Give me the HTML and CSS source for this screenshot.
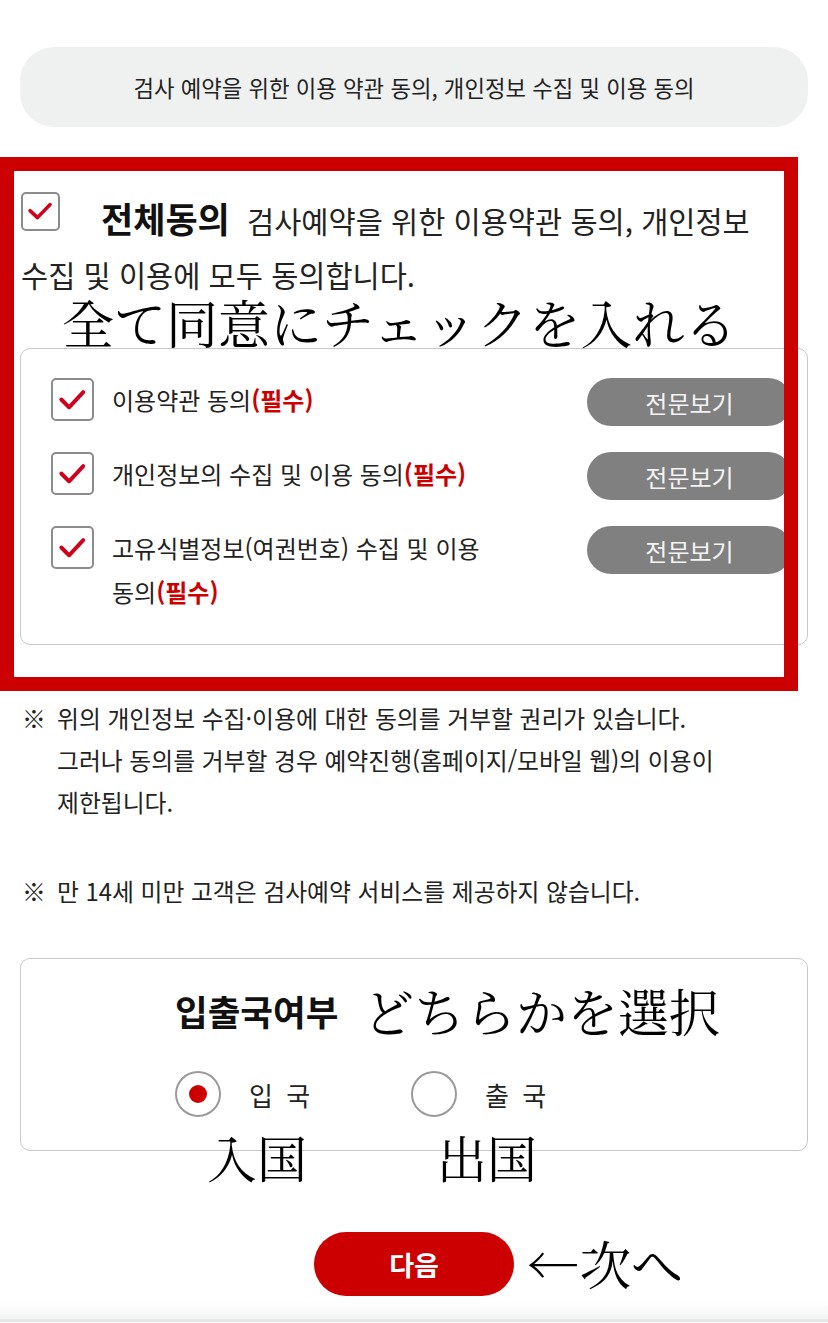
FILE: index.html
```html
<!DOCTYPE html>
<html lang="ko">
<head>
<meta charset="utf-8">
<title>검사 예약 약관 동의</title>
<link rel="stylesheet" href="styles.css">
</head>
<body>
<div class="page">
  <div class="banner">검사 예약을 위한 이용 약관 동의, 개인정보 수집 및 이용 동의</div>

  <div class="agree-all">
    <span class="check check-lg"><svg viewBox="0 0 40 40"><path d="M8 19 L16.5 27 L31 12"/></svg></span><strong class="all-title">전체동의</strong> 검사예약을 위한 이용약관 동의, 개인정보 수집 및 이용에 모두 동의합니다.
  </div>

  <div class="terms">
    <div class="term">
      <span class="check"><svg viewBox="0 0 40 40"><path d="M8.5 20 L16.5 28 L31 12.5"/></svg></span>
      <p class="term-text">이용약관 동의<b class="req">(필수)</b></p>
      <button class="view">전문보기</button>
    </div>
    <div class="term">
      <span class="check"><svg viewBox="0 0 40 40"><path d="M8.5 20 L16.5 28 L31 12.5"/></svg></span>
      <p class="term-text">개인정보의 수집 및 이용 동의<b class="req">(필수)</b></p>
      <button class="view">전문보기</button>
    </div>
    <div class="term">
      <span class="check"><svg viewBox="0 0 40 40"><path d="M8.5 20 L16.5 28 L31 12.5"/></svg></span>
      <p class="term-text">고유식별정보(여권번호) 수집 및 이용 동의<b class="req">(필수)</b></p>
      <button class="view">전문보기</button>
    </div>
  </div>

  <div class="notes">
    <div class="note"><span class="mark">※</span><p>위의 개인정보 수집·이용에 대한 동의를 거부할 권리가 있습니다.<br>그러나 동의를 거부할 경우 예약진행(홈페이지/모바일 웹)의 이용이<br>제한됩니다.</p></div>
    <div class="note note-2"><span class="mark">※</span><p>만 14세 미만 고객은 검사예약 서비스를 제공하지 않습니다.</p></div>
  </div>

  <div class="travel">
    <div class="travel-title">입출국여부</div>
    <div class="radios">
      <label class="radio"><span class="dot on"></span><span class="radio-label">입 국</span></label>
      <label class="radio"><span class="dot"></span><span class="radio-label">출 국</span></label>
    </div>
  </div>

  <div class="actions"><button class="next">다음</button></div>
  <div class="footer-edge"></div>

  <div class="highlight"></div>
  <div class="note-jp jp-all">全て同意にチェックを入れる</div>
  <div class="note-jp jp-select">どちらかを選択</div>
  <div class="note-jp jp-in">入国</div>
  <div class="note-jp jp-out">出国</div>
  <div class="note-jp jp-next">←次へ</div>
</div>
</body>
</html>
```
FILE: styles.css
```css
html, body {
  margin: 0;
  padding: 0;
  background: #ffffff;
}
body {
  font-family: "Noto Sans CJK KR", "Noto Sans", sans-serif;
  color: #222222;
  word-break: keep-all;
}
.page {
  position: relative;
  width: 828px;
  padding: 47px 20px 0;
  box-sizing: border-box;
}
.banner {
  height: 80px;
  border-radius: 34px;
  background: #eff0f0;
  display: flex;
  align-items: center;
  justify-content: center;
  font-size: 22.3px;
  color: #222;
}

.agree-all {
  padding: 64px 20px 0 1px;
  font-size: 29.5px;
  line-height: 54px;
}
.check {
  display: inline-flex;
  box-sizing: border-box;
  width: 43px;
  height: 43px;
  border: 2px solid #8c8c8c;
  border-radius: 5px;
  background: #fff;
  flex-shrink: 0;
}
.check svg {
  width: 100%;
  height: 100%;
}
.check path {
  fill: none;
  stroke: #d0021b;
  stroke-width: 4;
  stroke-linecap: round;
  stroke-linejoin: round;
}
.check-lg {
  width: 39px;
  height: 39px;
  vertical-align: top;
  margin-top: 1px;
  margin-right: 41px;
}
.all-title {
  font-size: 35px;
  font-weight: 700;
  color: #111;
  margin-right: 9px;
}

.terms {
  margin-top: 47px;
  border: 1.5px solid #c8c8c8;
  border-radius: 10px;
  padding: 29px 15px 30px 30px;
  display: flex;
  flex-direction: column;
  gap: 26px;
}
.term {
  display: flex;
  align-items: flex-start;
}
.term-text {
  margin: 0 0 0 18px;
  width: 400px;
  font-size: 24px;
  line-height: 44px;
  color: #222;
}
.req {
  color: #cc0000;
  font-weight: 700;
}
.view {
  margin-left: auto;
  width: 205px;
  height: 48px;
  border: none;
  border-radius: 24px;
  background: #808080;
  color: #f4f4f4;
  font-family: inherit;
  font-size: 24px;
  padding: 0;
}

.notes {
  margin-top: 52px;
  font-size: 23.8px;
  line-height: 42px;
}
.note {
  display: flex;
  padding-left: 2px;
}
.note p {
  margin: 0;
}
.mark {
  width: 35px;
  flex-shrink: 0;
}
.note-2 {
  margin-top: 47px;
}

.travel {
  margin-top: 46px;
  border: 1.5px solid #c8c8c8;
  border-radius: 10px;
  padding: 26px 20px 33px 154px;
}
.travel-title {
  font-size: 35.5px;
  font-weight: 700;
  line-height: 52px;
  color: #111;
}
.radios {
  display: flex;
  margin-top: 34px;
}
.radio {
  display: flex;
  align-items: center;
  width: 236px;
}
.dot {
  box-sizing: border-box;
  width: 46px;
  height: 46px;
  border: 2px solid #9a9a9a;
  border-radius: 50%;
  display: flex;
  align-items: center;
  justify-content: center;
  margin-right: 28px;
}
.dot.on::after {
  content: "";
  width: 18px;
  height: 18px;
  border-radius: 50%;
  background: #cc0000;
}
.radio-label {
  font-size: 26px;
  word-spacing: 6px;
  color: #222;
}

.actions {
  margin-top: 81px;
  display: flex;
  justify-content: center;
}
.next {
  width: 200px;
  height: 64px;
  border: none;
  border-radius: 32px;
  background: #cc0000;
  color: #fff;
  font-family: inherit;
  font-size: 27px;
  font-weight: 700;
  padding: 0;
}
.footer-edge {
  margin: 6px -20px 0;
  height: 17px;
  background: linear-gradient(#ffffff, #f3f4f4);
  border-bottom: 3px solid #e6e7e7;
}

.highlight {
  position: absolute;
  left: 0;
  top: 157px;
  width: 798px;
  height: 534px;
  box-sizing: border-box;
  border: 14px solid #cc0000;
  pointer-events: none;
}
.note-jp {
  position: absolute;
  font-family: "Noto Serif CJK JP", "Noto Sans CJK JP", serif;
  color: #000;
  line-height: 1;
  white-space: nowrap;
}
.jp-all {
  left: 62px;
  top: 296px;
  font-size: 52px;
}
.jp-select {
  left: 363px;
  top: 985px;
  font-size: 51px;
}
.jp-in {
  left: 207px;
  top: 1131px;
  font-size: 50px;
}
.jp-out {
  left: 437px;
  top: 1131px;
  font-size: 50px;
}
.jp-next {
  left: 527px;
  top: 1237px;
  font-size: 52px;
}
```
